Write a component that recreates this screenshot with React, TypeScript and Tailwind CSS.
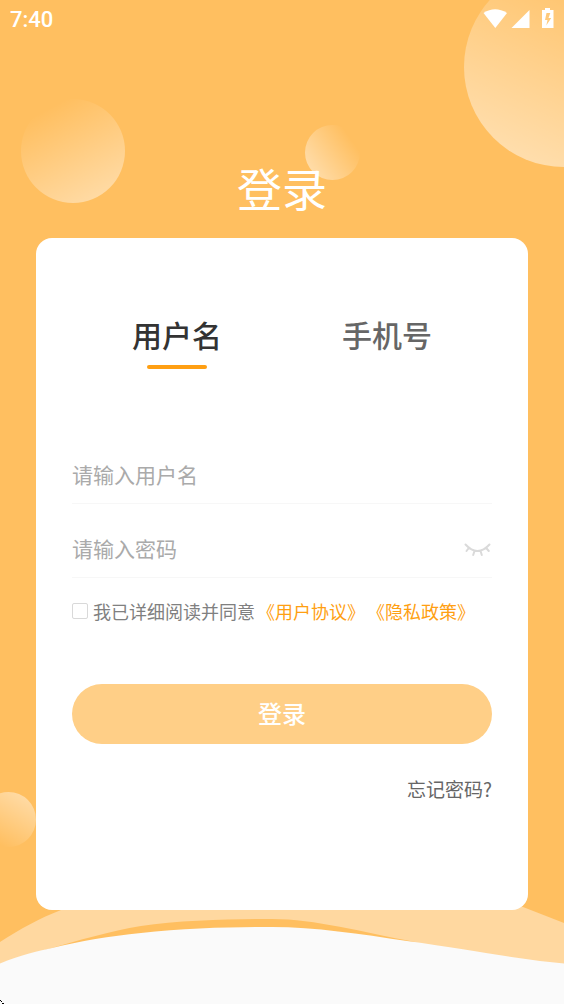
import { useState } from "react";
import type { ReactNode } from "react";

function Backdrop() {
  return (
    <div aria-hidden="true" className="absolute inset-0 overflow-hidden">
      <div className="absolute -right-[100px] -top-[33px] size-[200px] rounded-full bg-linear-[205deg] from-white/5 from-15% to-white/55" />
      <div className="absolute left-[21px] top-[99px] size-[104px] rounded-full bg-linear-[152deg] from-white/0 from-15% to-white/50" />
      <div className="absolute left-[305px] top-[125px] size-[55px] rounded-full bg-linear-[235deg] from-white/0 from-20% to-white/55" />
      <div className="absolute -left-[19px] top-[792px] size-[55px] rounded-full bg-linear-[30deg] from-white/0 from-15% to-white/50" />
      <svg
        className="absolute bottom-0 left-0 h-[124px] w-full"
        viewBox="0 880 564 124"
        preserveAspectRatio="none"
      >
        <path
          d="M0 942C20 929 40 918 61 910C120 884 200 870 300 870C390 870 460 880 523 907L564 923V1004H0Z"
          fill="#ffd8a0"
        />
        <path
          d="M45 950C80 940 110 931 141 926C180 920 235 919 272 919C315 919 362 932 415 942V960H45Z"
          fill="#ffbf60"
        />
        <path
          d="M0 963.500C20 955 38 951 52 948C80 941 110 936 141 933C185 928 235 927 272 927C315 927 360 934 407 941C450 947 485 953 515 957.500C532 960 548 962 564 963.500V1004H0Z"
          fill="#fafafa"
        />
      </svg>
      <svg
        className="absolute bottom-0 left-0 size-1"
        viewBox="0 0 4 4"
        shapeRendering="crispEdges"
      >
        <path d="M0 0h1v1h-1zM1 1h1v1h-1zM2 3h2v1h-2z" fill="#000" />
      </svg>
    </div>
  );
}

function StatusBar() {
  return (
    <div className="flex h-10 items-center justify-between px-2.5 text-white">
      <span className="font-[Roboto,sans-serif] text-[22px] leading-6 font-medium">7:40</span>
      <svg
        width="72"
        height="24"
        viewBox="0 -3 72 24"
        fill="currentColor"
        aria-hidden="true"
      >
        <path d="M1.500 2Q13 -5.500 25 2L13.300 17Z" />
        <path d="M47.500 -1V17H29.500Z" />
        <path
          fillRule="evenodd"
          d="M63 -3H68V-1H71.500V17H60V-1H63ZM64.500 2L63 9H65.500L64.300 14.500L69.200 7H66.500L68.300 2Z"
        />
      </svg>
    </div>
  );
}

function Tab({
  active,
  onSelect,
  children,
}: {
  active: boolean;
  onSelect: () => void;
  children: ReactNode;
}) {
  return (
    <button
      type="button"
      role="tab"
      aria-selected={active}
      onClick={onSelect}
      className={`flex flex-1 flex-col items-center gap-[9px] text-[30px] leading-[44px] font-medium ${
        active ? "text-[#333333]" : "text-[#666666]"
      }`}
    >
      {children}
      <span className={`h-1 w-[60px] rounded-full ${active ? "bg-[#ff9f12]" : "bg-transparent"}`} />
    </button>
  );
}

function ClosedEye() {
  return (
    <svg
      width="28"
      height="16"
      viewBox="0 0 28 16"
      fill="none"
      stroke="#dadada"
      strokeWidth="2"
      strokeLinecap="round"
      aria-hidden="true"
    >
      <path d="M1.500 2.500Q13.500 15.500 25.500 2.500M4.800 6L2.500 9M10.500 9L9.200 13M16.500 9L17.800 13M22.200 6L24.800 9" />
    </svg>
  );
}

const inputClass =
  "min-w-0 flex-1 bg-transparent text-[21px] leading-8 text-[#333333] outline-none placeholder:text-[#aaaaaa] placeholder:opacity-100";

export default function App() {
  const [tab, setTab] = useState<"name" | "phone">("name");
  const [visible, setVisible] = useState(false);

  return (
    <div className="relative min-h-screen bg-[#ffbf60] font-['Noto_Sans_CJK_SC',sans-serif]">
      <Backdrop />
      <div className="relative">
        <StatusBar />
        <h1 className="pt-[116px] text-center text-[45px] leading-[64px] font-normal text-white">
          登录
        </h1>
        <main className="mx-9 mt-[18px] rounded-2xl bg-white px-9 pt-[74px] pb-[106px]">
          <div role="tablist" className="flex">
            <Tab active={tab === "name"} onSelect={() => setTab("name")}>
              用户名
            </Tab>
            <Tab active={tab === "phone"} onSelect={() => setTab("phone")}>
              手机号
            </Tab>
          </div>
          <form onSubmit={(e) => e.preventDefault()} className="pt-[61px]">
            <div className="flex h-[74px] items-center border-b border-[#f7f7f7] pt-3.5">
              <input type="text" aria-label="用户名" placeholder="请输入用户名" className={inputClass} />
            </div>
            <div className="flex h-[74px] items-center border-b border-[#f7f7f7] pt-3.5">
              <input
                type={visible ? "text" : "password"}
                aria-label="密码"
                placeholder="请输入密码"
                className={inputClass}
              />
              <button
                type="button"
                aria-label="显示密码"
                className="pt-1"
                onClick={() => setVisible(!visible)}
              >
                <ClosedEye />
              </button>
            </div>
            <div className="flex items-center gap-0.5 pt-[19px] text-[18px] leading-7 whitespace-nowrap text-[#808080]">
              <input
                id="agree"
                type="checkbox"
                className="mr-[3px] size-4 shrink-0 appearance-none rounded-xs border border-[#d9d9d9] bg-white checked:bg-[#ff9f12]"
              />
              <label htmlFor="agree">我已详细阅读并同意</label>
              <a href="#terms" className="text-[#ff9f12]">
                《用户协议》
              </a>
              <a href="#privacy" className="text-[#ff9f12]">
                《隐私政策》
              </a>
            </div>
            <button
              type="submit"
              className="mt-[59px] h-[60px] w-full rounded-full bg-[#ffcf87] pb-0.5 text-[24px] leading-9 font-medium text-white"
            >
              登录
            </button>
            <div className="flex justify-end pt-[31px] pb-px">
              <a href="#forgot" className="text-[19px] leading-7 text-[#666666]">
                忘记密码?
              </a>
            </div>
          </form>
        </main>
      </div>
    </div>
  );
}
